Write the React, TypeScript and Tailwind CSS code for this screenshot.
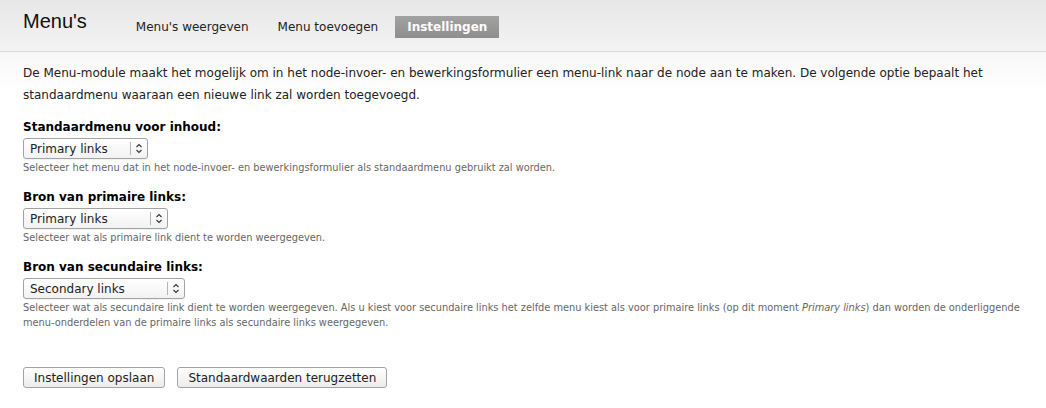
const font = { fontFamily: '"DejaVu Sans", sans-serif' };

const Chevrons = () => (
  <svg width="8" height="11" viewBox="0 0 8 11" fill="none" stroke="#333" strokeWidth="1.1">
    <path d="M1.5 4 L4 1.5 L6.5 4" />
    <path d="M1.5 7 L4 9.5 L6.5 7" />
  </svg>
);

const FakeSelect = ({ value, width }: { value: string; width: string }) => (
  <div
    className={`flex items-center h-[21px] ${width} rounded-[3px] border border-[#a3a3a3] bg-gradient-to-b from-white to-[#f2f2f2] text-[12px] text-[#222] shadow-[0_1px_0_rgba(0,0,0,0.05)]`}
  >
    <span className="flex-1 pl-[6px] leading-none">{value}</span>
    <span className="flex items-center justify-center w-[17px] h-[13px] border-l border-[#b5b5b5]">
      <Chevrons />
    </span>
  </div>
);

const Field = ({
  label,
  value,
  width,
  children,
  className,
}: {
  label: string;
  value: string;
  width: string;
  children: React.ReactNode;
  className?: string;
}) => (
  <div className={className}>
    <div className="font-bold text-[12px] leading-[18px] text-black">{label}</div>
    <div className="mt-[2px]">
      <FakeSelect value={value} width={width} />
    </div>
    <div className="mt-[1px] text-[9.8px] leading-[15px] text-[#666]">{children}</div>
  </div>
);

export default function App() {
  return (
    <div className="w-[1046px] h-[408px] bg-white overflow-hidden" style={font}>
      <div className="h-[52px] bg-gradient-to-b from-[#e7e7e7] to-[#f3f3f3] border-b border-[#d9d9d9] flex items-end pl-[23px]">
        <h1
          className="text-[20px] leading-none text-[#111] mb-[20px] mr-[49px]"
          style={{ fontFamily: '"Liberation Sans", Arial, sans-serif' }}
        >
          Menu's
        </h1>
        <nav className="flex items-center gap-[29px] mb-[11px] text-[12px] text-[#222]">
          <a className="py-[4px]">Menu's weergeven</a>
          <a className="py-[4px]">Menu toevoegen</a>
          <a className="-ml-[12px] h-[22px] px-[12px] flex items-center bg-gradient-to-b from-[#a2a2a2] to-[#8e8e8e] text-white font-bold">
            Instellingen
          </a>
        </nav>
      </div>
      <div className="bg-gradient-to-b from-[#f7f7f7] to-white to-[40px] px-[23px] pt-[10px] text-[12px] text-[#222]">
        <p className="leading-[22px]">
          De Menu-module maakt het mogelijk om in het node-invoer- en bewerkingsformulier een menu-link naar de node aan te maken. De volgende optie bepaalt het standaardmenu waaraan een nieuwe link zal worden toegevoegd.
        </p>
        <Field className="mt-[12px]" label="Standaardmenu voor inhoud:" value="Primary links" width="w-[125px]">
          Selecteer het menu dat in het node-invoer- en bewerkingsformulier als standaardmenu gebruikt zal worden.
        </Field>
        <Field className="mt-[13px]" label="Bron van primaire links:" value="Primary links" width="w-[145px]">
          Selecteer wat als primaire link dient te worden weergegeven.
        </Field>
        <Field className="mt-[13px]" label="Bron van secundaire links:" value="Secondary links" width="w-[162px]">
          Selecteer wat als secundaire link dient te worden weergegeven. Als u kiest voor secundaire links het zelfde menu kiest als voor primaire links (op dit moment <em>Primary links</em>) dan worden de onderliggende menu-onderdelen van de primaire links als secundaire links weergegeven.
        </Field>
        <div className="mt-[37px] flex gap-[12px]">
          <button className="h-[21px] px-[10px] rounded-[3px] border border-[#a3a3a3] bg-gradient-to-b from-white to-[#ececec] text-[12px] text-[#222] leading-none">
            Instellingen opslaan
          </button>
          <button className="h-[21px] px-[10px] rounded-[3px] border border-[#a3a3a3] bg-gradient-to-b from-white to-[#ececec] text-[12px] text-[#222] leading-none">
            Standaardwaarden terugzetten
          </button>
        </div>
      </div>
    </div>
  );
}
